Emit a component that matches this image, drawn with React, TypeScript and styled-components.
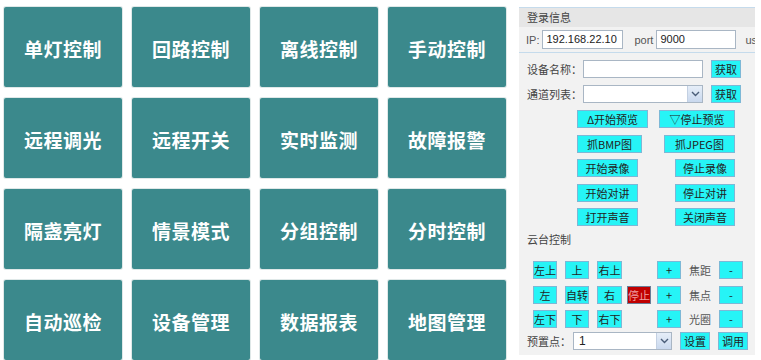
import React from "react";
import styled, { createGlobalStyle } from "styled-components";

const GlobalStyle = createGlobalStyle`
  html, body {
    margin: 0;
    padding: 0;
    background: #ffffff;
  }
  * {
    box-sizing: border-box;
  }
`;

const Page = styled.div`
  display: flex;
  align-items: flex-start;
  width: 761px;
  height: 360px;
  overflow: hidden;
  background: #ffffff;
  font-family: "Noto Sans CJK SC", "Liberation Sans", sans-serif;
`;

const TileGrid = styled.div`
  display: grid;
  grid-template-columns: repeat(4, 118px);
  grid-auto-rows: 80px;
  column-gap: 10px;
  row-gap: 11px;
  padding: 7px 0 0 4px;
  flex-shrink: 0;
`;

const Tile = styled.div`
  display: flex;
  align-items: center;
  justify-content: center;
  background: #3b898c;
  border-radius: 2px;
  box-shadow: 0 0 0 1px rgba(40, 100, 100, 0.15);
  color: #ffffff;
  font-family: "Noto Sans CJK SC", sans-serif;
  font-weight: 700;
  font-size: 19px;
  letter-spacing: 0.5px;
  padding-top: 3px;
`;

const Panel = styled.div`
  flex-shrink: 0;
  width: 236px;
  height: 348px;
  margin: 7px 0 0 13px;
  background: #f2f2f2;
  border-top: 1px solid #c5dbec;
  overflow: hidden;
  font-size: 11px;
  color: #333;
`;

const PanelHeader = styled.div`
  height: 19px;
  line-height: 19px;
  padding-left: 8px;
  background: #e6e6e6;
  color: #444;
  font-size: 11px;
`;

const LoginRow = styled.div`
  display: flex;
  align-items: center;
  height: 26px;
  padding-left: 7px;
  white-space: nowrap;
  border-bottom: 1px solid #c5dbec;
  font-family: "Liberation Sans", sans-serif;
  font-size: 11px;
  color: #555;
`;

const Gap = styled.span<{ $w: number }>`
  display: inline-block;
  flex-shrink: 0;
  width: ${(p) => p.$w}px;
`;

const TextInput = styled.div<{ $w: number; $h?: number }>`
  flex-shrink: 0;
  width: ${(p) => p.$w}px;
  height: ${(p) => p.$h ?? 19}px;
  line-height: ${(p) => (p.$h ?? 19) - 2}px;
  padding-left: 3px;
  background: #ffffff;
  border: 1px solid #a9b6c4;
  font-family: "Liberation Sans", sans-serif;
  font-size: 11px;
  color: #222;
  overflow: hidden;
`;

const SelectBox = styled.div<{ $w: number }>`
  position: relative;
  flex-shrink: 0;
  width: ${(p) => p.$w}px;
  height: 18px;
  line-height: 16px;
  padding-left: 5px;
  background: #ffffff;
  border: 1px solid #a9b6c4;
  font-family: "Liberation Sans", sans-serif;
  font-size: 12px;
  color: #222;
`;

const SelectArrow = styled.div`
  position: absolute;
  top: 0;
  right: 0;
  bottom: 0;
  width: 15px;
  display: flex;
  align-items: center;
  justify-content: center;
  background: linear-gradient(#e6eef8, #c9d8ee);
  border-left: 1px solid #c3d0e2;
`;

const FormBody = styled.div`
  padding: 7px 0 0 8px;
`;

const FieldRow = styled.div`
  display: flex;
  align-items: center;
  height: 18px;
  margin-bottom: 7px;
`;

const FieldLabel = styled.span<{ $w: number }>`
  flex-shrink: 0;
  width: ${(p) => p.$w}px;
  font-size: 11px;
  color: #444;
`;

const CyanButton = styled.div<{ $w: number; $ml?: number }>`
  flex-shrink: 0;
  display: flex;
  align-items: center;
  justify-content: center;
  width: ${(p) => p.$w}px;
  height: 18px;
  margin-left: ${(p) => p.$ml ?? 0}px;
  background: #26f4f6;
  border: 1px solid #7db8d6;
  font-size: 11px;
  color: #222;
  white-space: nowrap;
`;

const StopButton = styled(CyanButton)`
  background: #c00000;
  border-color: #6b7d96;
  color: #f0a0a0;
`;

const ActionGrid = styled.div`
  display: flex;
  flex-direction: column;
  gap: 6.5px;
  width: 158px;
  margin: 0 0 0 50px;
`;

const ActionRow = styled.div`
  display: flex;
  justify-content: space-between;
`;

const SectionTitle = styled.div`
  margin: 6px 0 15px 0;
  height: 14px;
  line-height: 14px;
  font-size: 11px;
  color: #444;
`;

const PtzGrid = styled.div`
  display: grid;
  grid-template-columns: 32px 32px 30px 30px 24px 38px 24px;
  grid-auto-rows: 18px;
  row-gap: 6.5px;
  padding-left: 6px;
`;

const PtzLabel = styled.div`
  display: flex;
  align-items: center;
  justify-content: center;
  font-size: 11px;
  color: #555;
`;

const PresetRow = styled.div`
  display: flex;
  align-items: center;
  height: 18px;
  margin-top: 4px;
`;

const Chevron = () => (
  <svg width="9" height="6" viewBox="0 0 9 6">
    <path d="M1 1 L4.5 4.5 L8 1" fill="none" stroke="#4a5d78" strokeWidth="1.4" />
  </svg>
);

const tiles = [
  "单灯控制", "回路控制", "离线控制", "手动控制",
  "远程调光", "远程开关", "实时监测", "故障报警",
  "隔盏亮灯", "情景模式", "分组控制", "分时控制",
  "自动巡检", "设备管理", "数据报表", "地图管理",
];

const actions: [string, number, string, number][] = [
  ["Δ开始预览", 71, "▽停止预览", 76],
  ["抓BMP图", 65, "抓JPEG图", 71],
  ["开始录像", 61, "停止录像", 60],
  ["开始对讲", 61, "停止对讲", 60],
  ["打开声音", 61, "关闭声音", 60],
];

const App: React.FC = () => {
  return (
    <>
      <GlobalStyle />
      <Page>
        <TileGrid>
          {tiles.map((t) => (
            <Tile key={t}>{t}</Tile>
          ))}
        </TileGrid>

        <Panel>
          <PanelHeader>登录信息</PanelHeader>
          <LoginRow>
            <span>IP:</span>
            <Gap $w={3} />
            <TextInput $w={81}>192.168.22.10</TextInput>
            <Gap $w={11} />
            <span>port</span>
            <Gap $w={3} />
            <TextInput $w={80}>9000</TextInput>
            <Gap $w={9} />
            <span>us</span>
          </LoginRow>

          <FormBody>
            <FieldRow>
              <FieldLabel $w={56}>设备名称：</FieldLabel>
              <TextInput $w={120} $h={18} />
              <CyanButton $w={30} $ml={8}>获取</CyanButton>
            </FieldRow>
            <FieldRow>
              <FieldLabel $w={56}>通道列表：</FieldLabel>
              <SelectBox $w={120}>
                <SelectArrow>
                  <Chevron />
                </SelectArrow>
              </SelectBox>
              <CyanButton $w={30} $ml={8}>获取</CyanButton>
            </FieldRow>

            <ActionGrid>
              {actions.map(([a, aw, b, bw]) => (
                <ActionRow key={a}>
                  <CyanButton $w={aw}>{a}</CyanButton>
                  <CyanButton $w={bw}>{b}</CyanButton>
                </ActionRow>
              ))}
            </ActionGrid>

            <SectionTitle>云台控制</SectionTitle>

            <PtzGrid>
              <CyanButton $w={24}>左上</CyanButton>
              <CyanButton $w={24}>上</CyanButton>
              <CyanButton $w={25}>右上</CyanButton>
              <span />
              <CyanButton $w={24}>+</CyanButton>
              <PtzLabel>焦距</PtzLabel>
              <CyanButton $w={24}>-</CyanButton>

              <CyanButton $w={24}>左</CyanButton>
              <CyanButton $w={24}>自转</CyanButton>
              <CyanButton $w={25}>右</CyanButton>
              <StopButton $w={24}>停止</StopButton>
              <CyanButton $w={24}>+</CyanButton>
              <PtzLabel>焦点</PtzLabel>
              <CyanButton $w={24}>-</CyanButton>

              <CyanButton $w={24}>左下</CyanButton>
              <CyanButton $w={24}>下</CyanButton>
              <CyanButton $w={25}>右下</CyanButton>
              <span />
              <CyanButton $w={24}>+</CyanButton>
              <PtzLabel>光圈</PtzLabel>
              <CyanButton $w={24}>-</CyanButton>
            </PtzGrid>

            <PresetRow>
              <FieldLabel $w={46}>预置点：</FieldLabel>
              <SelectBox $w={99}>
                1
                <SelectArrow>
                  <Chevron />
                </SelectArrow>
              </SelectBox>
              <CyanButton $w={30} $ml={8}>设置</CyanButton>
              <CyanButton $w={30} $ml={8}>调用</CyanButton>
            </PresetRow>
          </FormBody>
        </Panel>
      </Page>
    </>
  );
};

export default App;
